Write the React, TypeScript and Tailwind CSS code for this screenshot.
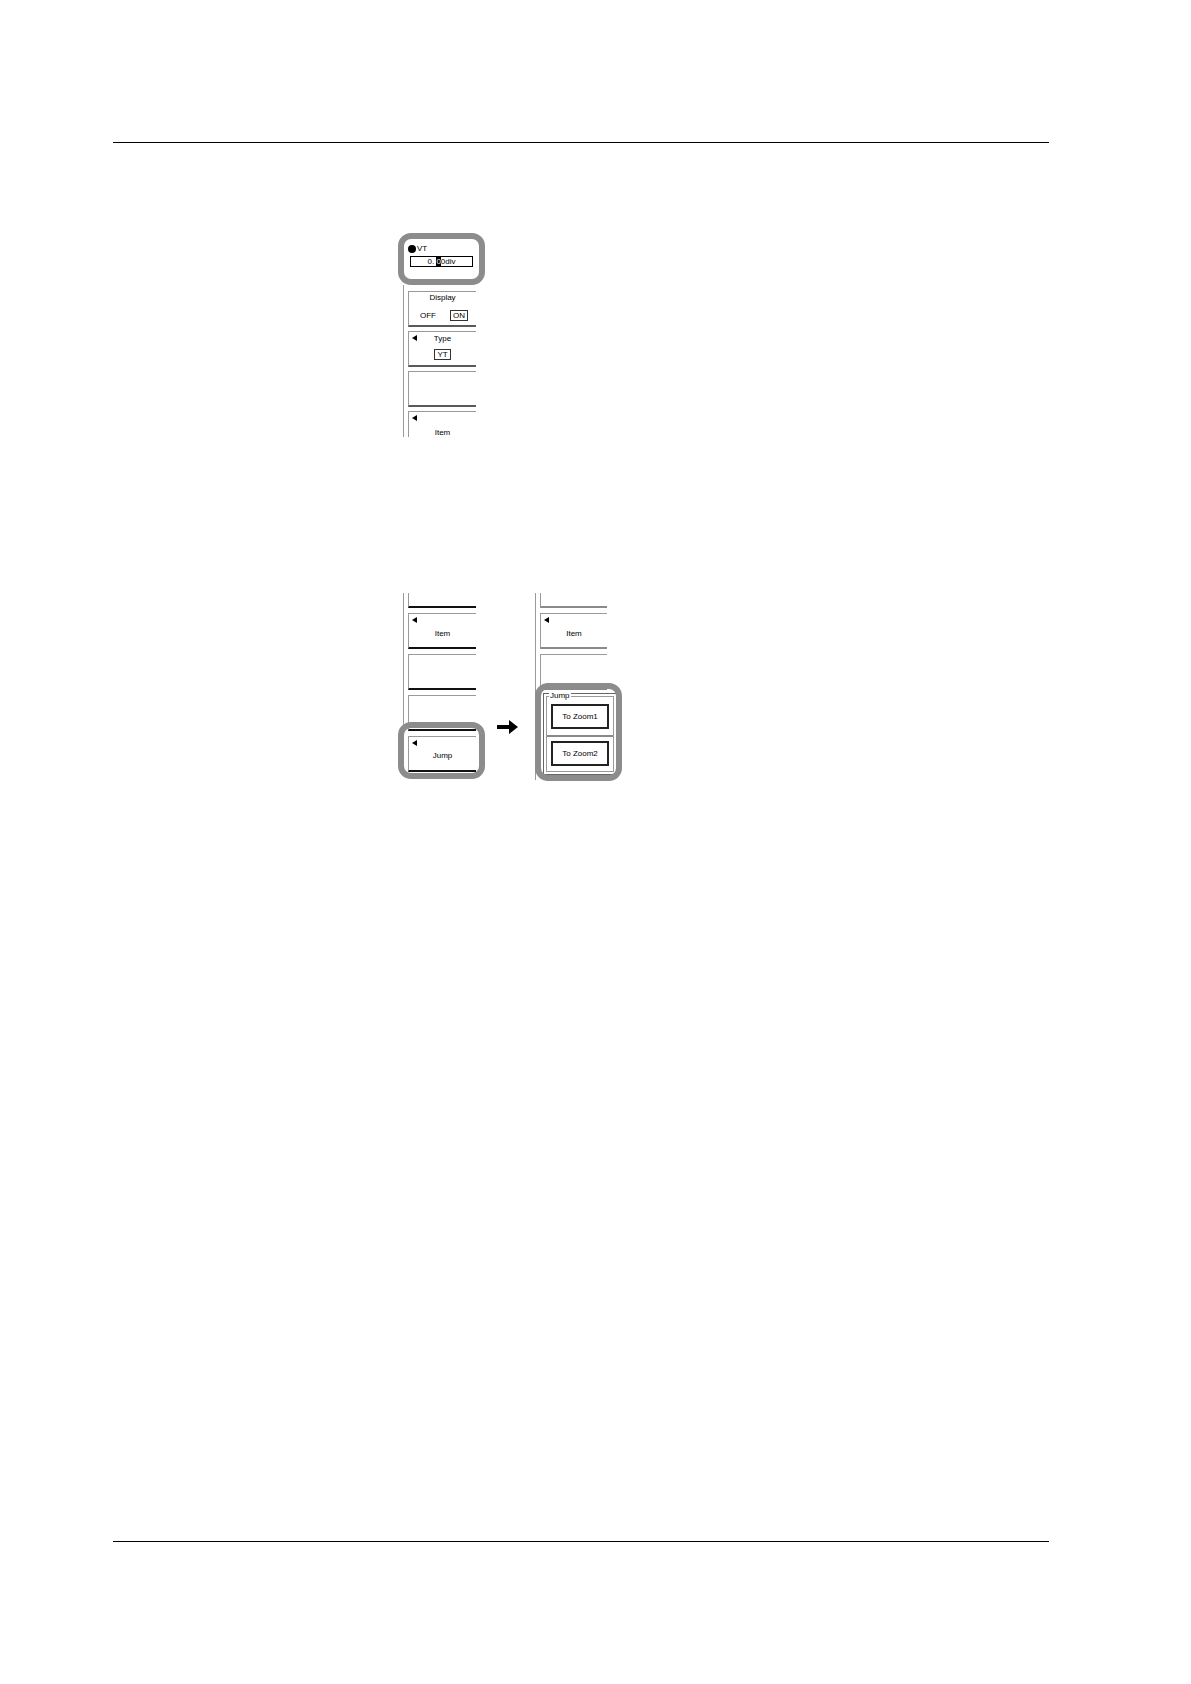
import React from 'react';

type BoxProps = {
  tone?: 'dark' | 'mid' | 'light';
  arrow?: boolean;
  cut?: 'top' | 'bottom';
  className?: string;
  children?: React.ReactNode;
};

function Tri() {
  return (
    <span className="absolute left-[3px] top-[3px] w-0 h-0 border-y-[3px] border-y-transparent border-r-[5px] border-r-black" />
  );
}

function MenuBox({ tone = 'mid', arrow, cut, className = '', children }: BoxProps) {
  const bottom =
    tone === 'dark'
      ? 'border-b-2 border-b-[#111]'
      : tone === 'light'
        ? 'border-b-2 border-b-[#8a8a8a]'
        : 'border-b-2 border-b-[#5a5a5a]';
  return (
    <div
      className={`relative shrink-0 border-l border-[#9a9a9a] ${cut === 'top' ? '' : 'border-t'} ${
        cut === 'bottom' ? '' : bottom
      } flex flex-col items-center text-[8px] leading-[9px] text-black ${className}`}
    >
      {arrow && <Tri />}
      {children}
    </div>
  );
}

function Ring({ className }: { className: string }) {
  return <div className={`absolute rounded-[13px] border-[6px] border-[#8c8c8c] ${className}`} />;
}

function FigureOne() {
  return (
    <div className="relative w-[87px] ml-[398px] mt-[90px]">
      <div className="h-[52px] pt-[12px] pl-[10px] flex flex-col">
        <div className="flex items-center h-[8px] gap-[1px]">
          <span className="w-[8px] h-[8px] rounded-full bg-black" />
          <span className="text-[8px] leading-[8px]">VT</span>
        </div>
        <div className="ml-[2px] mt-[3px] w-[63px] h-[11px] border border-black text-[8px] leading-[9px] text-center">
          0.&nbsp;<span className="bg-black text-white">0</span>0div
        </div>
        <div className="mt-[13px] -ml-[2px] w-[72px] h-[2px] bg-black" />
      </div>
      <div className="ml-[5px] h-[152px] overflow-hidden border-l border-[#9a9a9a] pl-[4px] pt-[6px] flex flex-col gap-[4px]">
        <MenuBox className="w-[68px] h-[36px]">
          <span className="pt-[1px]">Display</span>
          <div className="w-full flex items-center pl-[11px] mt-[8px]">
            <span>OFF</span>
            <span className="ml-auto mr-[8px] border border-[#333] px-[2px]">ON</span>
          </div>
        </MenuBox>
        <MenuBox arrow className="w-[68px] h-[36px]">
          <span className="pt-[2px]">Type</span>
          <span className="mt-[6px] border border-[#333] px-[2px]">YT</span>
        </MenuBox>
        <MenuBox className="w-[68px] h-[36px]" />
        <MenuBox arrow cut="bottom" className="w-[68px] h-[36px]">
          <span className="pt-[16px]">Item</span>
        </MenuBox>
      </div>
      <Ring className="left-0 top-0 w-[87px] h-[52px]" />
    </div>
  );
}

function ZoomButton({ label }: { label: string }) {
  return (
    <div className="w-[58px] h-[25px] border-2 border-[#222] flex items-center justify-center text-[8px] leading-[9px]">
      {label}
    </div>
  );
}

function FigureTwo() {
  return (
    <div className="flex items-start ml-[398px] mt-[156px]">
      {/* before */}
      <div className="relative w-[87px]">
        <div className="ml-[5px] h-[181px] border-l border-[#9a9a9a] pl-[4px] flex flex-col gap-[5px]">
          <MenuBox tone="dark" cut="top" className="w-[68px] h-[15px]" />
          <MenuBox tone="dark" arrow className="w-[68px] h-[36px]">
            <span className="pt-[15px]">Item</span>
          </MenuBox>
          <MenuBox tone="dark" className="w-[68px] h-[36px]" />
          <MenuBox tone="dark" className="w-[68px] h-[36px]" />
          <MenuBox tone="dark" arrow className="w-[68px] h-[36px]">
            <span className="pt-[14px]">Jump</span>
          </MenuBox>
        </div>
        <Ring className="left-0 top-[129px] w-[87px] h-[57px]" />
      </div>

      <svg className="ml-[12px] mt-[127px] shrink-0" width="21" height="14" viewBox="0 0 21 14">
        <path d="M0 5 H12 V0 L21 7 L12 14 V9 H0 Z" fill="#000" />
      </svg>

      {/* after */}
      <div className="relative w-[87px] ml-[17px]">
        <div className="h-[187px] border-l border-[#9a9a9a] pl-[4px] flex flex-col gap-[5px]">
          <MenuBox tone="light" cut="top" className="w-[67px] h-[15px]" />
          <MenuBox tone="light" arrow className="w-[67px] h-[36px]">
            <span className="pt-[15px]">Item</span>
          </MenuBox>
          <MenuBox tone="light" className="w-[67px] h-[36px]" />
        </div>
        <div className="absolute left-[8px] top-[100px] w-[74px] h-[82px] bg-white border border-[#666] p-[2px]">
          <div className="relative h-full border border-[#9a9a9a] flex flex-col">
            <span className="absolute left-[2px] -top-[6px] bg-white px-[1px] text-[8px] leading-[9px]">Jump</span>
            <div className="pt-[7px] pb-[6px] pl-[4px] border-b-2 border-b-[#8a8a8a]">
              <ZoomButton label="To Zoom1" />
            </div>
            <div className="pt-[4px] pl-[4px]">
              <ZoomButton label="To Zoom2" />
            </div>
          </div>
        </div>
        <Ring className="left-0 top-[90px] w-[87px] h-[98px]" />
      </div>
    </div>
  );
}

export default function App() {
  return (
    <div className="w-[1191px] h-[1684px] bg-white flex flex-col font-['Liberation_Sans',Arial,sans-serif] text-black">
      <div className="mt-[142px] ml-[113px] w-[936px] border-t border-black" />
      <FigureOne />
      <FigureTwo />
      <div className="mt-auto mb-[142px] ml-[113px] w-[936px] border-t border-black" />
    </div>
  );
}
